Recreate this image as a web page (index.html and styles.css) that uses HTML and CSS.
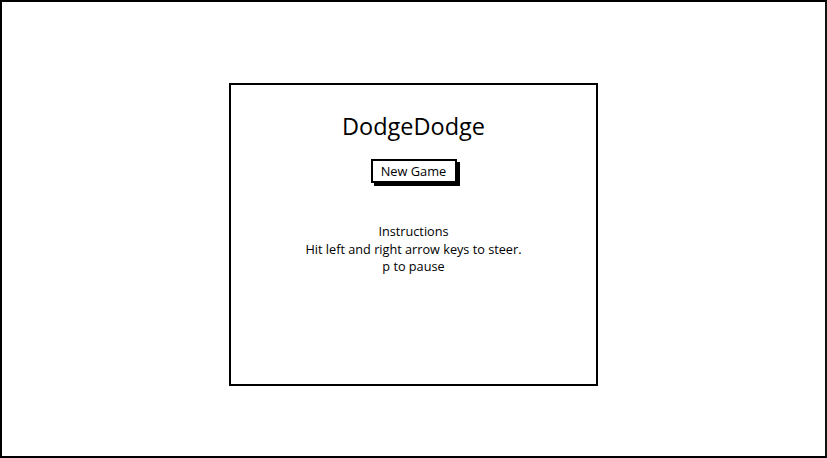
FILE: index.html
```html
<!DOCTYPE html>
<html>
<head>
<meta charset="utf-8">
<link rel="stylesheet" href="styles.css">
</head>
<body>
<div class="frame">
  <div class="panel">
    <h1 class="title">DodgeDodge</h1>
    <button class="btn">New Game</button>
    <div class="instructions">
      <div>Instructions</div>
      <div>Hit left and right arrow keys to steer.</div>
      <div>p to pause</div>
    </div>
  </div>
</div>
</body>
</html>
```

FILE: styles.css
```css
html, body {
  margin: 0;
  padding: 0;
  background: #fff;
}
.frame {
  box-sizing: border-box;
  width: 827px;
  height: 458px;
  border: 2px solid #000;
  border-right-color: #111;
  display: flex;
  flex-direction: column;
  align-items: center;
  justify-content: flex-start;
  padding-top: 81px;
  font-family: "Open Sans", "Liberation Sans", sans-serif;
  color: #000;
}
.panel {
  box-sizing: border-box;
  width: 369px;
  height: 303px;
  border: 2px solid #000;
  display: flex;
  flex-direction: column;
  align-items: center;
  padding-top: 26px;
}
.title {
  margin: 0;
  font-weight: 400;
  font-size: 23.5px;
  line-height: 30px;
}
.btn {
  margin-top: 18px;
  box-sizing: border-box;
  width: 86px;
  height: 24px;
  border: 2px solid #000;
  background: #fff;
  box-shadow: 3px 3px 0 #000;
  font-family: inherit;
  font-size: 12.8px;
  color: #000;
  padding: 0;
}
.instructions {
  margin-top: 40px;
  font-size: 12.7px;
  line-height: 17.5px;
  text-align: center;
}
```
